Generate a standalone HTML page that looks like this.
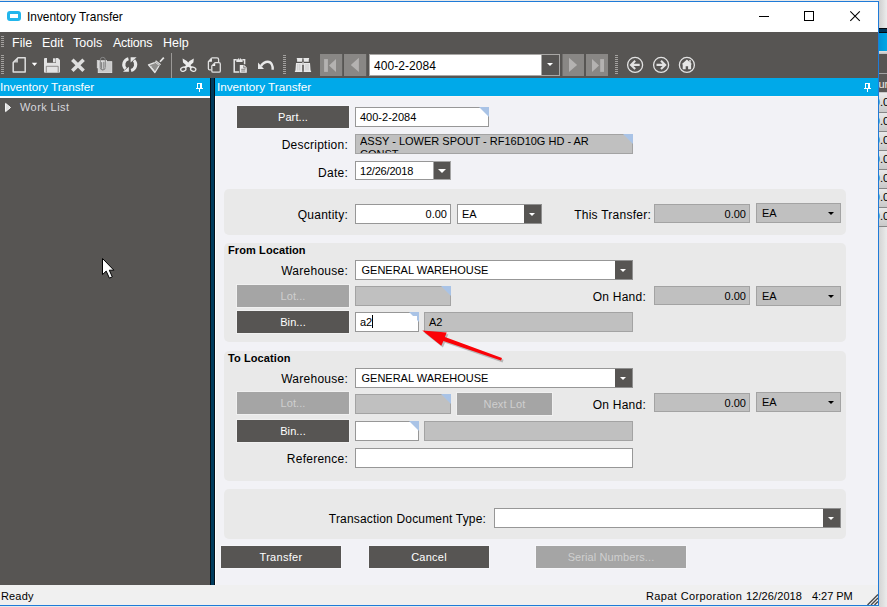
<!DOCTYPE html>
<html><head><meta charset="utf-8"><title>Inventory Transfer</title>
<style>
*{box-sizing:border-box;margin:0;padding:0}
html,body{width:887px;height:607px;overflow:hidden;background:#e9e9e9}
body{font-family:"Liberation Sans",Arial,sans-serif;font-size:12px;color:#000;position:relative}
.a{position:absolute}
.t{position:absolute;white-space:nowrap;line-height:14px;height:14px}
.l{position:absolute;white-space:nowrap;line-height:14px;height:14px;text-align:right;letter-spacing:.25px;font-size:12px;margin-left:1px}
.btn{position:absolute;background:#575553;color:#fff;text-align:center;line-height:22px;height:22px;font-size:11px;letter-spacing:.1px;box-shadow:0 0 0 1px rgba(255,255,255,.35)}
.btn.dis{background:#a5a5a5;color:#cfcfcf}
.fld{position:absolute;background:#fff;border:1px solid #979797;height:20px;line-height:19px;padding-left:4px;font-size:11px;white-space:nowrap}
.fld.g{background:#c0c0c0;border-color:#a3a3a3}
.fld.num{text-align:right;padding-right:3px;padding-left:0}
.tri:after{content:"";position:absolute;right:-1px;top:-1px;border-style:solid;border-width:0 10px 10px 0;border-color:transparent #a9c3e6 transparent transparent}
.dd{position:absolute;right:-1px;top:-1px;bottom:-1px;width:18px;background:#575553;border:1px solid #8f8f8f;border-left:0}
.dd:after{content:"";position:absolute;left:5.400px;top:7.800px;border-style:solid;border-width:3.500px 3.100px 0 3.100px;border-color:#fff transparent transparent transparent}
.dd.big:after{left:3.800px;top:6.800px;border-width:4.600px 4.300px 0 4.300px}
.sa{position:absolute;right:6px;top:8px;width:0;height:0;border-style:solid;border-width:3.500px 3.500px 0 3.500px;border-color:#000 transparent transparent transparent}
.grp{position:absolute;left:224px;width:622px;background:#e9e9e9;border-radius:5px}
.gt{position:absolute;font-weight:bold;font-size:11px;white-space:nowrap;line-height:14px;letter-spacing:.1px}
.grip{position:absolute;width:3px;background:repeating-linear-gradient(180deg,#a3a19f 0 1px,transparent 1px 2px)}
.row{height:19px;border-bottom:1px solid #868686;background:linear-gradient(180deg,#e9e9e9,#c9c9c9);position:relative;overflow:hidden}
.row span{position:absolute;left:-5.500px;top:1px;font-size:11.500px;line-height:14px;white-space:nowrap}
.row span b{font-weight:normal;color:#1f6fd0}
</style></head><body>

<!-- background window strip on right -->
<div class="a" style="left:879px;top:0;width:8px;height:28px;background:linear-gradient(90deg,#cfcfcf,#ececec)"></div>
<div class="a" style="left:879px;top:28px;width:8px;height:5px;background:#003557;border-top:1px solid #02090f;border-bottom:1px solid #02090f"></div>
<div class="a" style="left:879px;top:33px;width:8px;height:18px;background:linear-gradient(90deg,#0094d6,#00a6e6)"></div>
<div class="a" style="left:879px;top:51px;width:8px;height:3px;background:linear-gradient(180deg,#e4e4e4,#bdbdbd)"></div>
<div class="a" style="left:879px;top:54px;width:8px;height:19px;background:#575553"></div>
<div class="a" style="left:879px;top:73px;width:8px;height:1px;background:#a3a3a3"></div>
<div class="a" style="left:879px;top:74px;width:8px;height:19px;background:#5a5856;border-bottom:1px solid #c8c8c8;overflow:hidden"><span class="t" style="left:-.500px;top:3px;font-size:11px;color:#f0ece6">ur</span></div>
<div class="a" style="left:879px;top:94px;width:8px;height:133px;overflow:hidden">
<div class="row"><span><b>0</b>.00</span></div><div class="row"><span><b>0</b>.00</span></div><div class="row"><span><b>0</b>.00</span></div><div class="row"><span><b>0</b>.00</span></div><div class="row"><span><b>0</b>.00</span></div><div class="row"><span><b>0</b>.00</span></div><div class="row"><span><b>0</b>.00</span></div>
</div>
<div class="a" style="left:879px;top:227px;width:8px;height:380px;background:linear-gradient(90deg,#d4d4d4,#ebebeb)"></div>

<!-- main window -->
<div class="a" id="win" style="left:0;top:1px;width:879px;height:605px;background:#f2f2f7;border-right:1px solid #1f7bd8;border-bottom:1px solid #1f7bd8;border-top:1px solid #1f7bd8;overflow:hidden"></div>
<div class="a" style="left:0;top:0;width:878px;height:607px;overflow:hidden">

<!-- title bar -->
<div class="a" style="left:0;top:2px;width:878px;height:30px;background:#fff"></div>
<div class="a" style="left:7px;top:11px;width:14px;height:10px;border:3px solid #22b6ec;border-radius:3px;background:#fff"></div>
<div class="t" id="title" style="left:27px;top:10px;font-size:11.9px">Inventory Transfer</div>
<svg class="a" style="left:750px;top:2px" width="127" height="30" viewBox="0 0 127 30">
<path d="M9 14.500h10" stroke="#000" stroke-width="1" fill="none"/>
<rect x="54.500" y="9.500" width="9" height="9" stroke="#000" stroke-width="1" fill="none"/>
<path d="M100.300 9.300l9.500 9.500M109.800 9.300l-9.500 9.500" stroke="#000" stroke-width="1.100" fill="none"/>
</svg>

<!-- menu + toolbar -->
<div class="a" style="left:0;top:32px;width:878px;height:46px;background:#575553"></div>
<div class="grip" style="left:1px;top:36px;height:12px"></div>
<div class="grip" style="left:1px;top:55px;height:20px"></div>
<div class="t" id="m1" style="left:12px;top:36px;font-size:12.500px;color:#fff">File</div>
<div class="t" id="m2" style="left:42px;top:36px;font-size:12.500px;color:#fff">Edit</div>
<div class="t" id="m3" style="left:73px;top:36px;font-size:12.500px;color:#fff">Tools</div>
<div class="t" id="m4" style="left:113px;top:36px;font-size:12.500px;letter-spacing:-.25px;color:#fff">Actions</div>
<div class="t" id="m5" style="left:163px;top:36px;font-size:12.500px;color:#fff">Help</div>

<svg class="a" id="tb" style="left:0;top:53px" width="720" height="25" viewBox="0 53 720 25">
<!-- new doc -->
<path d="M18 57.700h7.200v14.300h-12v-9.500z" fill="none" stroke="#dedede" stroke-width="1.500" stroke-linejoin="round"/>
<path d="M18 57.700v4.800h-5z" fill="#dedede" opacity=".8"/>
<path d="M31.800 62.800h5.400l-2.700 3.200z" fill="#fff"/>
<!-- save -->
<path d="M45 58h13l2 2v11.800q0 1 -1 1h-14q-1 0 -1 -1v-12.800q0 -1 1 -1z" fill="#e2e2e2"/>
<rect x="47" y="58" width="9" height="4.800" fill="#575553"/><rect x="53" y="58.300" width="2.600" height="4" fill="#e2e2e2"/>
<path d="M46.300 72.500v-6.200h11.900v6.200" stroke="#6b6967" stroke-width=".7" fill="none"/>
<!-- delete X -->
<path d="M72.300 59.700l11.300 11M83.600 59.700l-11.300 11" stroke="#dedede" stroke-width="3.600" fill="none"/>
<!-- attachment (grey) -->
<rect x="97.200" y="60.400" width="9.500" height="7.500" fill="#c2c2c2" stroke="#dcdcdc" stroke-width=".6"/>
<rect x="98.200" y="61.700" width="13.600" height="10.900" fill="#cacaca" stroke="#e4e4e4" stroke-width=".8"/>
<path d="M100.300 67.500v-7.700a2.500 2.500 0 0 1 5 0v7.500M103.800 61.800v6.800a1.150 1.150 0 0 1 -2.300 0v-6.400" stroke="#858585" stroke-width="1" fill="none"/>
<path d="M100.300 67.500a2.500 2.500 0 0 0 5 0" stroke="#858585" stroke-width="1" fill="none"/>
<!-- refresh -->
<g id="rf"><path d="M128.420 58.630A6.100 6.100 0 0 0 125.590 68.860" stroke="#e8e8e8" stroke-width="3.100" fill="none"/><path d="M122.900 71.800h6v-5.100z" fill="#e8e8e8"/></g>
<g transform="rotate(180 129.750 64.550)"><path d="M128.420 58.630A6.100 6.100 0 0 0 125.590 68.860" stroke="#e8e8e8" stroke-width="3.100" fill="none"/><path d="M122.900 71.800h6v-5.100z" fill="#e8e8e8"/></g>
<!-- broom -->
<path d="M163.800 57.600L160 61.800" stroke="#e6e6e6" stroke-width="1.700" fill="none"/>
<path d="M156 60.200L161 64.200L159.200 66L154.500 62.200z" fill="#e6e6e6"/>
<path d="M154.700 62.600L148.500 64.800L154.900 72.500L158.900 66" fill="rgba(230,230,230,.4)" stroke="#e6e6e6" stroke-width="1.300" stroke-linejoin="round"/>
<path d="M150.500 66.200l1.600 1.300M151.800 68.200l1.800 1.400M153.200 70l1.400 1.100" stroke="#e6e6e6" stroke-width="1" fill="none"/>
<path d="M155.300 61.300l4.800 3.900" stroke="#575553" stroke-width=".5" fill="none"/>
<!-- separator -->
<rect x="171" y="53" width="1" height="25" fill="#9b9997"/>
<!-- scissors -->
<path d="M182.600 58.400L186.900 60.900L189.600 64.300L192.300 67.300L191.100 68.600L187 66L183 62.600z" fill="#ececec"/>
<path d="M193.800 58.400L189.500 60.900L186.800 64.300L184.100 67.300L185.300 68.600L189.400 66L193.400 62.600z" fill="#ececec"/>
<g stroke="#e8e8e8" fill="none" stroke-width="1.300"><ellipse cx="183.300" cy="69.200" rx="2.700" ry="2" transform="rotate(-20 183.300 69.200)"/><ellipse cx="193.200" cy="69.200" rx="2.700" ry="2" transform="rotate(20 193.200 69.200)"/></g>
<!-- copy -->
<g stroke="#e0e0e0" fill="none" stroke-width="1.300" stroke-linejoin="round"><path d="M211.700 57.900h5.400q1.500 0 1.500 1.500v2.600M211.700 57.900l-3.300 3.700v7q0 1.200 1.200 1.200h1.600"/><path d="M215 62.600h4q1.300 0 1.300 1.300v7q0 1.300 -1.300 1.300h-5.900q-1.300 0 -1.300 -1.300v-5z"/></g>
<path d="M211.900 58.200v3.600h-3.300zM215.200 62.900v3.100h-3.100z" fill="#f4f4f4"/>
<!-- paste -->
<path d="M236.500 59.700h-2.300v12.300h5M242.500 59.700h2.100v4.600" stroke="#e6e6e6" fill="none" stroke-width="1.500"/>
<path d="M236.300 61.900v-2.600h1.500a1.700 1.700 0 0 1 3.300 0h1.500v2.600z" fill="#e6e6e6"/><circle cx="239.400" cy="58.700" r=".7" fill="#575553"/>
<path d="M239.800 65h4.300l2.700 2.600v5.100h-7z" fill="#ececec"/><path d="M241.200 69.300h4.200M241.200 71h4.200M243.800 65.300v2.600h2.600" stroke="#575553" stroke-width=".7" fill="none"/>
<!-- undo -->
<path d="M261 66C263 62.800 265.800 61.700 267.800 61.700C271.500 61.700 272.900 66 272.700 69.700" stroke="#e8e8e8" stroke-width="2.400" fill="none"/><path d="M258 62.400v6.500h6z" fill="#e8e8e8"/>
<!-- binoculars -->
<g fill="#e8e8e8"><path d="M296.800 58.100h5.700v1.100h-.3v2.600h-5.100v-2.600h-.3zM303.400 58.100h5.700v1.100h-.3v2.600h-5.100v-2.600h-.3z"/><path d="M296 62.900h6.200v7.900h.2v1.300h-7.500v-1.300h.5zM303.800 62.900h6.200l.6 7.900h.5v1.300h-7.500v-1.300h.2z"/><rect x="302.200" y="62.300" width="1.600" height="2.600"/></g>
<path d="M297.800 64v6.500M299.800 64v6.500M306 64v6.500M308 64v6.500" stroke="#575553" stroke-width=".35" opacity=".6"/>
<!-- first / prev (disabled) -->
<rect x="320" y="54" width="22.200" height="22" fill="#898785"/><rect x="344" y="54" width="22.200" height="22" fill="#898785"/>
<g fill="#b4b2b1"><rect x="324.100" y="59.100" width="3.800" height="12.800"/><path d="M336 59.100v12.800l-7 -6.400z"/><path d="M358.900 57.800v14.300l-8.100 -7.100z"/></g>
<!-- next / last -->
<rect x="562.500" y="54" width="21.500" height="22" fill="#898785"/><rect x="586" y="54" width="22" height="22" fill="#898785"/>
<g fill="#b4b2b1"><path d="M569 57.800v14.300l8.100 -7.100z"/><path d="M592 59.100v12.800l7 -6.400z"/><rect x="600.200" y="59.100" width="3.800" height="12.800"/></g>
<!-- back/fwd/home -->
<g stroke="#e2e2e2" fill="none" stroke-width="1.300"><circle cx="635.100" cy="64.900" r="7.500"/><circle cx="661.100" cy="64.900" r="7.500"/><circle cx="686.900" cy="64.900" r="7.500"/>
<path d="M639.700 64.900h-8M635.200 60.800l-4.200 4.100l4.200 4.100" stroke-width="2.100"/><path d="M656.500 64.900h8M661 60.800l4.200 4.100l-4.200 4.100" stroke-width="2.100"/></g>
<path d="M686.900 59.600l5.200 4.700h-1v5h-3v-3h-2.400v3h-3v-5h-1z" fill="#e6e6e6"/><rect x="689.300" y="60" width="1.400" height="3" fill="#e6e6e6"/>
</svg>
<div class="grip" style="left:283px;top:55px;height:20px"></div>
<div class="grip" style="left:615px;top:55px;height:20px"></div>
<!-- toolbar combo -->
<div class="a" style="left:369px;top:54px;width:191px;height:22px;background:#fff;border:1px solid #a9a7a5"><div class="t" style="left:4px;top:4px;font-size:12px;letter-spacing:.05px">400-2-2084</div><div class="dd" style="border-color:#a9a7a5;border-left:1px solid #a9a7a5;width:19px"></div></div>

<!-- panel headers -->
<div class="a" style="left:0;top:78px;width:210px;height:18px;background:#00a9e9"></div>
<div class="t" id="ph1" style="left:0px;top:80px;font-size:11.700px;color:#fff">Inventory Transfer</div>
<div class="a" style="left:215px;top:78px;width:663px;height:18px;background:#00a9e9"></div>
<div class="a" style="left:215px;top:96px;width:663px;height:489px;background:#f2f2f6;border-left:1px solid #fff;border-top:1px solid #fcf6f4"></div>
<div class="a" style="left:210px;top:78px;width:5px;height:507px;background:#003c5e;border-left:1px solid #04101a;border-right:1px solid #04101a"></div>
<div class="t" id="ph2" style="left:217px;top:80px;font-size:11.700px;color:#fff">Inventory Transfer</div>
<svg class="a" style="left:195px;top:82px" width="10" height="11" viewBox="195 82 10 11" shape-rendering="crispEdges"><path d="M197 83h5v5h1v1h-3v3h-1v-3h-3v-1h1zM198 84v4h2v-4z" fill="#fff" fill-rule="evenodd"/></svg>
<svg class="a" style="left:863px;top:82px" width="10" height="11" viewBox="863 82 10 11" shape-rendering="crispEdges"><path d="M865 83h5v5h1v1h-3v3h-1v-3h-3v-1h1zM866 84v4h2v-4z" fill="#fff" fill-rule="evenodd"/></svg>

<!-- left tree -->
<div class="a" style="left:0;top:96px;width:210px;height:489px;background:#575553;border-top:2px solid #fbfbfb"></div>
<svg class="a" style="left:4px;top:102px" width="9" height="12" viewBox="0 0 9 12"><path d="M1.600 1.400L6.500 5.500L1.600 9.600z" fill="#dcdcdc" stroke="#fff" stroke-width="1"/></svg>
<div class="t" id="wl" style="left:20px;top:100px;font-size:11px;letter-spacing:.42px;color:#d6d6dc">Work List</div>

<!-- mouse cursor -->
<svg class="a" style="left:100px;top:255px" width="18" height="26" viewBox="100 255 18 26"><path d="M102.500 258.500V274.600L106.200 271.100L109.400 278.100L112.300 276.900L109.300 270.200H113.900z" fill="#fff" stroke="#000" stroke-width="1" stroke-linejoin="miter"/></svg>

<!-- form -->
<div class="btn" style="left:237px;top:106px;width:112px">Part...</div>
<div class="fld tri" style="left:355px;top:107px;width:134px">400-2-2084</div>
<div class="l" style="left:247px;top:138px;width:100px">Description:</div>
<div class="fld g tri" style="left:355px;top:134px;width:278px;line-height:13px;white-space:normal"><div style="height:18px;overflow:hidden">ASSY - LOWER SPOUT - RF16D10G HD - AR<br>CONST</div></div>
<div class="l" style="left:247px;top:166px;width:100px">Date:</div>
<div class="fld" style="left:355px;top:161px;width:96px;height:19px;line-height:19px;letter-spacing:-.2px">12/26/2018<div class="dd big" style="width:18px;border:1px solid #a4a4a4"></div></div>

<div class="grp" style="top:189px;height:46px"></div>
<div class="l" style="left:247px;top:208px;width:100px">Quantity:</div>
<div class="fld num" style="left:355px;top:204px;width:96px">0.00</div>
<div class="fld" style="left:457px;top:204px;width:85px">EA<div class="dd"></div></div>
<div class="l" style="left:550px;top:208px;width:100px">This Transfer:</div>
<div class="fld g num" style="left:654px;top:204px;width:96px;height:19px;line-height:18px">0.00</div>
<div class="fld g" style="left:756px;top:203px;width:85px;height:20px;line-height:19px;padding-left:5px">EA<div class="sa"></div></div>

<div class="grp" style="top:243px;height:99px"></div>
<div class="gt" style="left:228px;top:243px">From Location</div>
<div class="l" style="left:247px;top:264px;width:100px">Warehouse:</div>
<div class="fld" style="left:355px;top:260px;width:278px;padding-left:5.500px">GENERAL WAREHOUSE<div class="dd"></div></div>
<div class="btn dis" style="left:237px;top:285px;width:112px">Lot...</div>
<div class="fld g tri" style="left:355px;top:286px;width:96px"></div>
<div class="l" style="left:545px;top:290px;width:100px">On Hand:</div>
<div class="fld g num" style="left:654px;top:286px;width:96px;height:19px;line-height:18px">0.00</div>
<div class="fld g" style="left:756px;top:286px;width:85px;height:20px;line-height:19px;padding-left:5px">EA<div class="sa"></div></div>
<div class="btn" style="left:237px;top:311px;width:112px">Bin...</div>
<div class="fld" style="left:355px;top:312px;width:64px"><svg class="a" style="left:53px;top:-1px" width="10" height="10" viewBox="0 0 10 10"><path d="M0 0h10v10z" fill="#a9c3e6"/></svg><div class="a" style="left:0;top:3px;width:61px;height:15px;background:#fff"></div><span style="position:relative">a2</span><span style="position:relative;display:inline-block;width:1px;height:13px;background:#000;vertical-align:-2px;margin-left:-.600px"></span></div>
<div class="fld g" style="left:424px;top:312px;width:209px;padding-left:4px">A2</div>

<div class="grp" style="top:351px;height:130px"></div>
<div class="gt" style="left:228px;top:351px">To Location</div>
<div class="l" style="left:247px;top:372px;width:100px">Warehouse:</div>
<div class="fld" style="left:355px;top:368px;width:278px;padding-left:5.500px">GENERAL WAREHOUSE<div class="dd"></div></div>
<div class="btn dis" style="left:237px;top:392px;width:112px">Lot...</div>
<div class="fld g tri" style="left:355px;top:394px;width:96px"></div>
<div class="btn dis" style="left:457px;top:393px;width:95px">Next Lot</div>
<div class="l" style="left:545px;top:398px;width:100px">On Hand:</div>
<div class="fld g num" style="left:654px;top:393px;width:96px;height:19px;line-height:18px">0.00</div>
<div class="fld g" style="left:756px;top:392px;width:85px;height:20px;line-height:19px;padding-left:5px">EA<div class="sa"></div></div>
<div class="btn" style="left:237px;top:420px;width:112px">Bin...</div>
<div class="fld tri" style="left:355px;top:421px;width:64px"></div>
<div class="fld g" style="left:424px;top:421px;width:209px"></div>
<div class="l" style="left:247px;top:452px;width:100px">Reference:</div>
<div class="fld" style="left:355px;top:448px;width:278px"></div>

<div class="grp" style="top:489px;height:50px"></div>
<div class="l" style="left:285px;top:512px;width:200px;letter-spacing:.17px">Transaction Document Type:</div>
<div class="fld" style="left:494px;top:508px;width:347px"><div class="dd"></div></div>

<div class="btn" style="left:221px;top:546px;width:120px;letter-spacing:.3px">Transfer</div>
<div class="btn" style="left:369px;top:546px;width:120px;letter-spacing:.25px">Cancel</div>
<div class="btn dis" style="left:536px;top:546px;width:150px">Serial Numbers...</div>

<!-- red arrow -->
<svg class="a" style="left:400px;top:320px" width="120" height="52" viewBox="400 320 120 52"><g transform="translate(1.6,1.8)" fill="#8c8c8c" opacity="0.55"><path d="M422.300 330.600L446.700 332.400L444.900 337L502 357.900L501 360.600L443.400 341L441.300 345.700z"/></g><path d="M422.300 330.600L446.700 332.400L444.900 337L502 357.900L501 360.600L443.400 341L441.300 345.700z" fill="#fb0207"/></svg>

<!-- status bar -->
<div class="a" style="left:0;top:585px;width:878px;height:20px;background:#f0f0f0"></div>
<div class="t" style="left:1px;top:589px;font-size:11px;letter-spacing:.15px">Ready</div>
<div class="t" style="left:646px;top:589px;font-size:11px;letter-spacing:.38px">Rapat Corporation</div>
<div class="t" style="left:746px;top:589px;font-size:11px;letter-spacing:.1px">12/26/2018</div>
<div class="t" style="left:812px;top:589px;font-size:11px;letter-spacing:-.05px">4:27 PM</div>
<svg class="a" style="left:866px;top:593px" width="12" height="12" viewBox="0 0 12 12"><path d="M12 1.500L1.500 12M12 5L5 12M12 8.500L8.500 12" stroke="#4a4a4a" stroke-width="1.400" fill="none"/></svg>
</div>
</body></html>
